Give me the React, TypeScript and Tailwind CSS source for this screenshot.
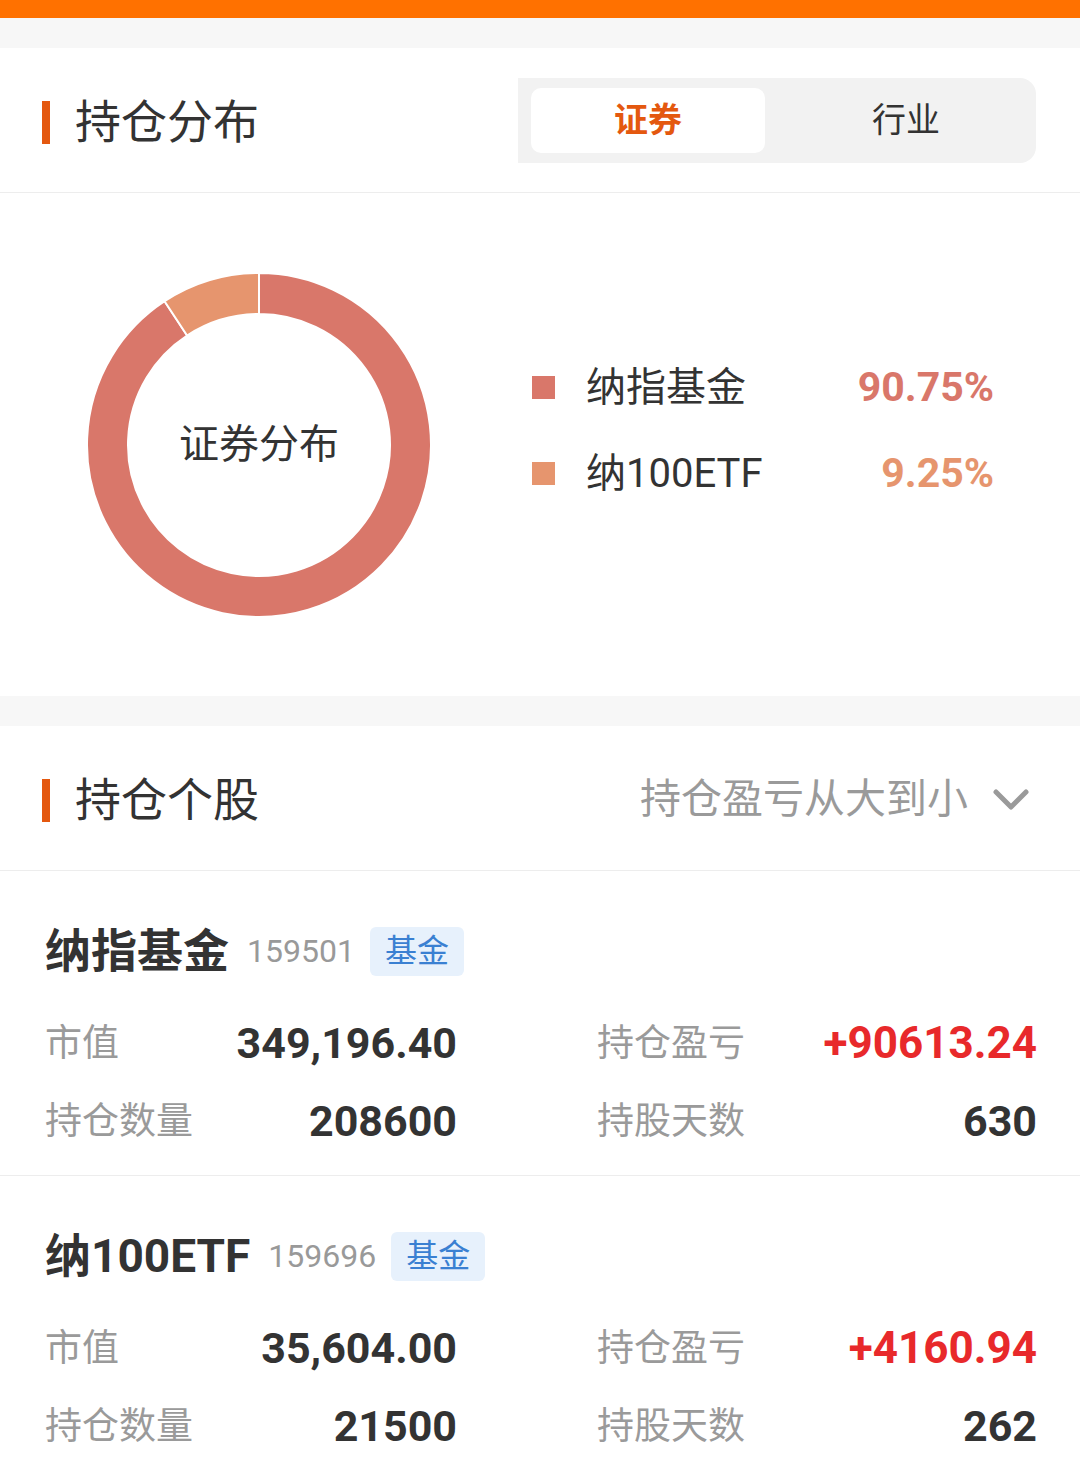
import React from "react";

const font = { fontFamily: 'Roboto, "Noto Sans CJK SC", sans-serif' };

// annular sector for the donut, angles in degrees from 12 o'clock, clockwise
function sector(cx: number, cy: number, ro: number, ri: number, a0: number, a1: number) {
  const pt = (r: number, a: number) => {
    const rad = ((a - 90) * Math.PI) / 180;
    return `${(cx + r * Math.cos(rad)).toFixed(2)} ${(cy + r * Math.sin(rad)).toFixed(2)}`;
  };
  const large = a1 - a0 > 180 ? 1 : 0;
  return `M ${pt(ro, a0)} A ${ro} ${ro} 0 ${large} 1 ${pt(ro, a1)} L ${pt(ri, a1)} A ${ri} ${ri} 0 ${large} 0 ${pt(ri, a0)} Z`;
}

const slices = [
  { name: "纳指基金", pct: 90.75, color: "#d9776a" },
  { name: "纳100ETF", pct: 9.25, color: "#e6956e" },
];

const stocks = [
  { name: "纳指基金", code: "159501", value: "349,196.40", qty: "208600", pnl: "+90613.24", days: "630" },
  { name: "纳100ETF", code: "159696", value: "35,604.00", qty: "21500", pnl: "+4160.94", days: "262" },
];

const Donut = () => {
  let start = 0;
  return (
    <div className="relative w-[344px] h-[344px]">
      <svg width="344" height="344" viewBox="0 0 344 344">
        {slices.map((s, i) => {
          const end = start + (s.pct / 100) * 360;
          const d = sector(172, 172, 172, 131, start, end);
          start = end;
          return <path key={i} d={d} fill={s.color} stroke="#ffffff" strokeWidth="2" strokeLinejoin="round" />;
        })}
      </svg>
      <div className="absolute inset-0 flex items-center justify-center text-[40px] text-[#333] leading-none">
        证券分布
      </div>
    </div>
  );
};

const SectionTitle = ({ title }: { title: string }) => (
  <div className="flex items-center mt-[4px]">
    <div className="w-[8px] h-[43px] bg-[#e4580f] ml-[42px]"></div>
    <div className="ml-[25px] text-[46px] text-[#333] leading-none">{title}</div>
  </div>
);

const App = () => {
  return (
    <div className="w-[1080px] h-[1471px] bg-white overflow-hidden" style={font}>
      <div className="h-[18px] bg-[#ff7100]"></div>
      <div className="h-[30px] bg-[#f7f7f7]"></div>

      {/* 持仓分布 header */}
      <div className="h-[145px] flex items-center justify-between border-b border-[#ededed]">
        <SectionTitle title="持仓分布" />
        <div className="mr-[44px] w-[518px] h-[85px] bg-[#f2f2f2] rounded-r-2xl flex items-center px-[13px] gap-[24px]">
          <div className="w-[234px] h-[65px] bg-white rounded-[10px] flex items-center justify-center text-[34px] font-bold text-[#e4580f] leading-none">
            证券
          </div>
          <div className="w-[234px] h-[65px] flex items-center justify-center text-[34px] text-[#333] leading-none">
            行业
          </div>
        </div>
      </div>

      {/* chart */}
      <div className="h-[503px] flex items-center pl-[87px]">
        <Donut />
        <div className="ml-[101px] w-[462px] flex flex-col mb-[28px]">
          {slices.map((s, i) => (
            <div key={i} className="h-[86px] flex items-center">
              <div className="w-[23px] h-[23px]" style={{ background: s.color }}></div>
              <div className="ml-[31px] text-[40px] text-[#333] leading-none">{s.name}</div>
              <div className="ml-auto text-[41px] font-bold leading-none" style={{ color: s.color }}>
                {s.pct.toFixed(2)}%
              </div>
            </div>
          ))}
        </div>
      </div>

      <div className="h-[30px] bg-[#f7f7f7]"></div>

      {/* 持仓个股 header */}
      <div className="h-[145px] flex items-center justify-between border-b border-[#ededed]">
        <SectionTitle title="持仓个股" />
        <div className="flex items-center mr-[51px] mt-[3px]">
          <span className="text-[41px] text-[#9a9a9a] leading-none">持仓盈亏从大到小</span>
          <svg className="ml-[25px]" width="36" height="22" viewBox="0 0 36 22">
            <path d="M3 3 L18 18 L33 3" fill="none" stroke="#9a9a9a" strokeWidth="5" strokeLinecap="round" strokeLinejoin="round" />
          </svg>
        </div>
      </div>

      {/* stocks */}
      {stocks.map((s, i) => (
        <div key={i} className="pl-[45px] pr-[43px] pt-[55px] pb-[15px] border-b border-[#ededed]">
          <div className="h-[50px] flex items-center">
            <span className="text-[46px] font-bold text-[#333] leading-none">{s.name}</span>
            <span className="ml-[18px] text-[32px] text-[#999] leading-none">{s.code}</span>
            <span className="ml-[15px] h-[49px] px-[15px] flex items-center rounded-[6px] bg-[#e7f1fc] text-[32px] text-[#3a80d2] leading-none">
              基金
            </span>
          </div>
          <div className="mt-[28px]">
            <div className="h-[78px] flex items-center">
              <div className="w-[412px] flex items-center justify-between">
                <span className="text-[37px] text-[#9a9a9a] leading-none">市值</span>
                <span className="text-[43px] font-bold text-[#333] leading-none">{s.value}</span>
              </div>
              <div className="ml-[140px] flex-1 flex items-center justify-between">
                <span className="text-[37px] text-[#9a9a9a] leading-none">持仓盈亏</span>
                <span className="text-[44px] font-bold text-[#e8292b] leading-none">{s.pnl}</span>
              </div>
            </div>
            <div className="h-[78px] flex items-center">
              <div className="w-[412px] flex items-center justify-between">
                <span className="text-[37px] text-[#9a9a9a] leading-none">持仓数量</span>
                <span className="text-[43px] font-bold text-[#333] leading-none">{s.qty}</span>
              </div>
              <div className="ml-[140px] flex-1 flex items-center justify-between">
                <span className="text-[37px] text-[#9a9a9a] leading-none">持股天数</span>
                <span className="text-[43px] font-bold text-[#333] leading-none">{s.days}</span>
              </div>
            </div>
          </div>
        </div>
      ))}
    </div>
  );
};

export default App;
